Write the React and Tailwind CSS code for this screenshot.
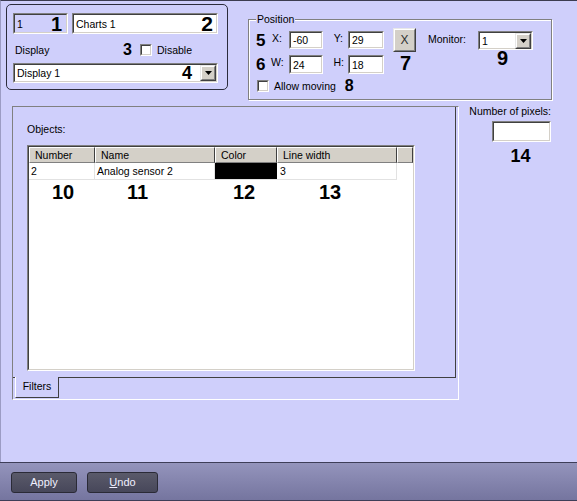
import React from 'react';

function Sunken({ className = '', bg = 'bg-white', children }) {
  return (
    <div className={`border border-t-[#808080] border-l-[#808080] border-b-white border-r-white ${className}`}>
      <div className={`w-full h-full border border-t-[#404040] border-l-[#404040] border-b-[#d4d0c8] border-r-[#d4d0c8] ${bg} flex items-center overflow-visible`}>
        {children}
      </div>
    </div>
  );
}

function Raised({ className = '', children }) {
  return (
    <div className={`border border-t-[#e8e8e8] border-l-[#e8e8e8] border-b-[#404040] border-r-[#404040] ${className}`}>
      <div className="w-full h-full border border-t-white border-l-white border-b-[#808080] border-r-[#808080] bg-[#d4d0c8] flex items-center justify-center">
        {children}
      </div>
    </div>
  );
}

function DropBtn() {
  return (
    <Raised className="w-[16px] h-[16px]">
      <svg width="7" height="4" viewBox="0 0 7 4">
        <polygon points="0,0 7,0 3.5,4" fill="#000" />
      </svg>
    </Raised>
  );
}

function Check() {
  return <Sunken className="w-[12px] h-[12px] shrink-0" />;
}

function Num({ children, className = 'text-[20px]' }) {
  return <span className={`font-bold leading-none text-black ${className}`}>{children}</span>;
}

export default function App() {
  return (
    <div className="w-[577px] h-[501px] bg-[#cfcffb] flex flex-col font-['Liberation_Sans',Arial,sans-serif] text-[10.5px] leading-[14px] text-black overflow-hidden">
      <div className="flex-1 flex flex-col border-t border-t-[#3c3c50] border-l border-l-[#9c9cc4]">
        {/* top row */}
        <div className="flex items-start">
          {/* object box */}
          <div className="ml-[5px] mt-[3px] w-[222px] h-[86px] rounded-[5px] border border-[#2c2c3c] pt-[8px] pl-[6px]">
            <div className="flex gap-[4px]">
              <Sunken className="w-[55px] h-[21px]" bg="bg-[#cfcffb]">
                <div className="flex w-full items-center justify-between pl-[2px] pr-[4px]">
                  <span>1</span>
                  <Num>1</Num>
                </div>
              </Sunken>
              <Sunken className="w-[146px] h-[21px]">
                <div className="flex w-full items-center justify-between pl-[2px] pr-[3px]">
                  <span>Charts 1</span>
                  <Num className="text-[21px]">2</Num>
                </div>
              </Sunken>
            </div>
            <div className="flex items-center mt-[8px] h-[16px] pl-[2px]">
              <span className="w-[108px]">Display</span>
              <span className="w-[17px]"><Num className="text-[16px]">3</Num></span>
              <Check />
              <span className="ml-[5px]">Disable</span>
            </div>
            <Sunken className="mt-[5px] w-[205px] h-[20px]">
              <div className="flex w-full items-center pl-[2px]">
                <span className="flex-1">Display 1</span>
                <Num className="text-[18px] mr-[8px]">4</Num>
                <DropBtn />
              </div>
            </Sunken>
          </div>

          {/* Position group */}
          <div className="ml-[20px] mt-[18px] w-[304px] h-[81px] border border-[#808080] shadow-[1px_1px_0_#ffffff,inset_1px_1px_0_#ffffff]">
            <span className="block w-fit -mt-[8px] ml-[7px] px-[1px] bg-[#cfcffb]">Position</span>
            <div className="flex items-start pl-[7px] mt-[5px]">
              <div className="flex flex-col">
                <div className="flex items-start h-[18px]">
                  <span className="w-[15px] pt-[1px]"><Num className="text-[17px]">5</Num></span>
                  <span className="w-[18px] pl-[1px]">X:</span>
                  <Sunken className="w-[34px] h-[18px]"><span className="pl-[2px]">-60</span></Sunken>
                  <span className="w-[25px] text-right pr-[5px]">Y:</span>
                  <Sunken className="w-[36px] h-[18px]"><span className="pl-[2px]">29</span></Sunken>
                </div>
                <div className="flex items-start h-[19px] mt-[6px]">
                  <span className="w-[15px] pt-[1px]"><Num className="text-[17px]">6</Num></span>
                  <span className="w-[18px]">W:</span>
                  <Sunken className="w-[34px] h-[19px]"><span className="pl-[2px]">24</span></Sunken>
                  <span className="w-[25px] text-right pr-[4px]">H:</span>
                  <Sunken className="w-[36px] h-[19px]"><span className="pl-[2px]">18</span></Sunken>
                </div>
                <div className="flex items-center h-[12px] mt-[6px]">
                  <div className="ml-[1px]"><Check /></div>
                  <span className="ml-[5px]">Allow moving</span>
                  <span className="ml-[9px]"><Num className="text-[16px]">8</Num></span>
                </div>
              </div>
              <div className="ml-[9px] w-[23px] flex flex-col items-center -mt-[3px]">
                <Raised className="w-[23px] h-[24px]">
                  <span className="text-[12px] text-[#303030]">X</span>
                </Raised>
                <span className="mt-[1px] pl-[2px]"><Num>7</Num></span>
              </div>
              <div className="ml-[12px] flex items-start">
                <span className="w-[50px] pt-[1px]">Monitor:</span>
                <div className="flex flex-col items-center">
                  <Sunken className="w-[55px] h-[19px]">
                    <div className="flex w-full items-center pl-[2px]">
                      <span className="flex-1">1</span>
                      <DropBtn />
                    </div>
                  </Sunken>
                  <span className="-mt-[2px] pr-[6px]"><Num>9</Num></span>
                </div>
              </div>
            </div>
          </div>
        </div>

        {/* second row */}
        <div className="flex items-start mt-[6px]">
          <div className="ml-[11px] w-[447px] h-[294px] border border-t-[#808080] border-l-[#808080] border-b-white border-r-white flex flex-col">
            <div className="w-[443px] h-[271px] border-r border-b border-r-[#404040] border-b-[#404040] pl-[14px] pt-[15px]">
              <div>Objects:</div>
              <div className="mt-[9px] w-[388px] h-[226px] border border-t-[#808080] border-l-[#808080] border-b-white border-r-white">
                <div className="w-full h-full border border-t-[#404040] border-l-[#404040] border-b-[#d4d0c8] border-r-[#d4d0c8] bg-white">
                  <div className="flex h-[16px] bg-[#d4d0c8]">
                    {[['Number', 'w-[66px]'], ['Name', 'w-[120px]'], ['Color', 'w-[62px]'], ['Line width', 'w-[120px]'], ['', 'flex-1']].map(([t, w], i) => (
                      <div key={i} className={`${w} h-full border border-t-white border-l-white border-b-[#808080] border-r-[#404040] pl-[5px] leading-[14px]`}>
                        {t}
                      </div>
                    ))}
                  </div>
                  <div className="flex h-[17px] w-[368px] border-b border-b-[#e2e2e2] leading-[16px]">
                    <div className="w-[66px] border-r border-r-[#e2e2e2] pl-[2px]">2</div>
                    <div className="w-[120px] border-r border-r-[#e2e2e2] pl-[2px]">Analog sensor 2</div>
                    <div className="w-[62px] bg-black" />
                    <div className="w-[120px] border-r border-r-[#e2e2e2] pl-[3px]">3</div>
                  </div>
                  <div className="flex mt-[2px] pl-[23px]">
                    <span className="w-[75px]"><Num>10</Num></span>
                    <span className="w-[106px]"><Num>11</Num></span>
                    <span className="w-[86px]"><Num>12</Num></span>
                    <span><Num>13</Num></span>
                  </div>
                </div>
              </div>
            </div>
            <div className="flex h-[21px]">
              <div className="ml-[2px] -mt-[1px] w-[44px] h-[21px] bg-[#cfcffb] border-l border-l-white border-r border-r-[#404040] border-b border-b-[#404040] text-center leading-[18px]">
                Filters
              </div>
            </div>
          </div>

          {/* right column */}
          <div className="w-[92px] flex flex-col items-end">
            <span className="-mt-[2px]">Number of pixels:</span>
            <div className="flex flex-col items-center mt-[3px]">
              <Sunken className="w-[59px] h-[21px]" />
              <span className="mt-[5px] pr-[2px]"><Num className="text-[18px]">14</Num></span>
            </div>
          </div>
        </div>
      </div>

      {/* bottom bar */}
      <div className="h-[39px] border-t border-b border-t-[#3e3e58] border-b-[#3e3e58] bg-gradient-to-b from-[#9494bc] to-[#75759f] flex items-start pt-[9px] pl-[11px] gap-[10px]">
        <button className="w-[66px] h-[21px] rounded-[3px] border border-[#2a2a36] bg-gradient-to-b from-[#5a5a6a] to-[#47475a] text-[#f0f0ff] text-[11px] leading-[19px]">
          Apply
        </button>
        <button className="w-[71px] h-[21px] rounded-[3px] border border-[#2a2a36] bg-gradient-to-b from-[#5a5a6a] to-[#47475a] text-[#f0f0ff] text-[11px] leading-[19px]">
          <span className="underline">U</span>ndo
        </button>
      </div>
    </div>
  );
}
